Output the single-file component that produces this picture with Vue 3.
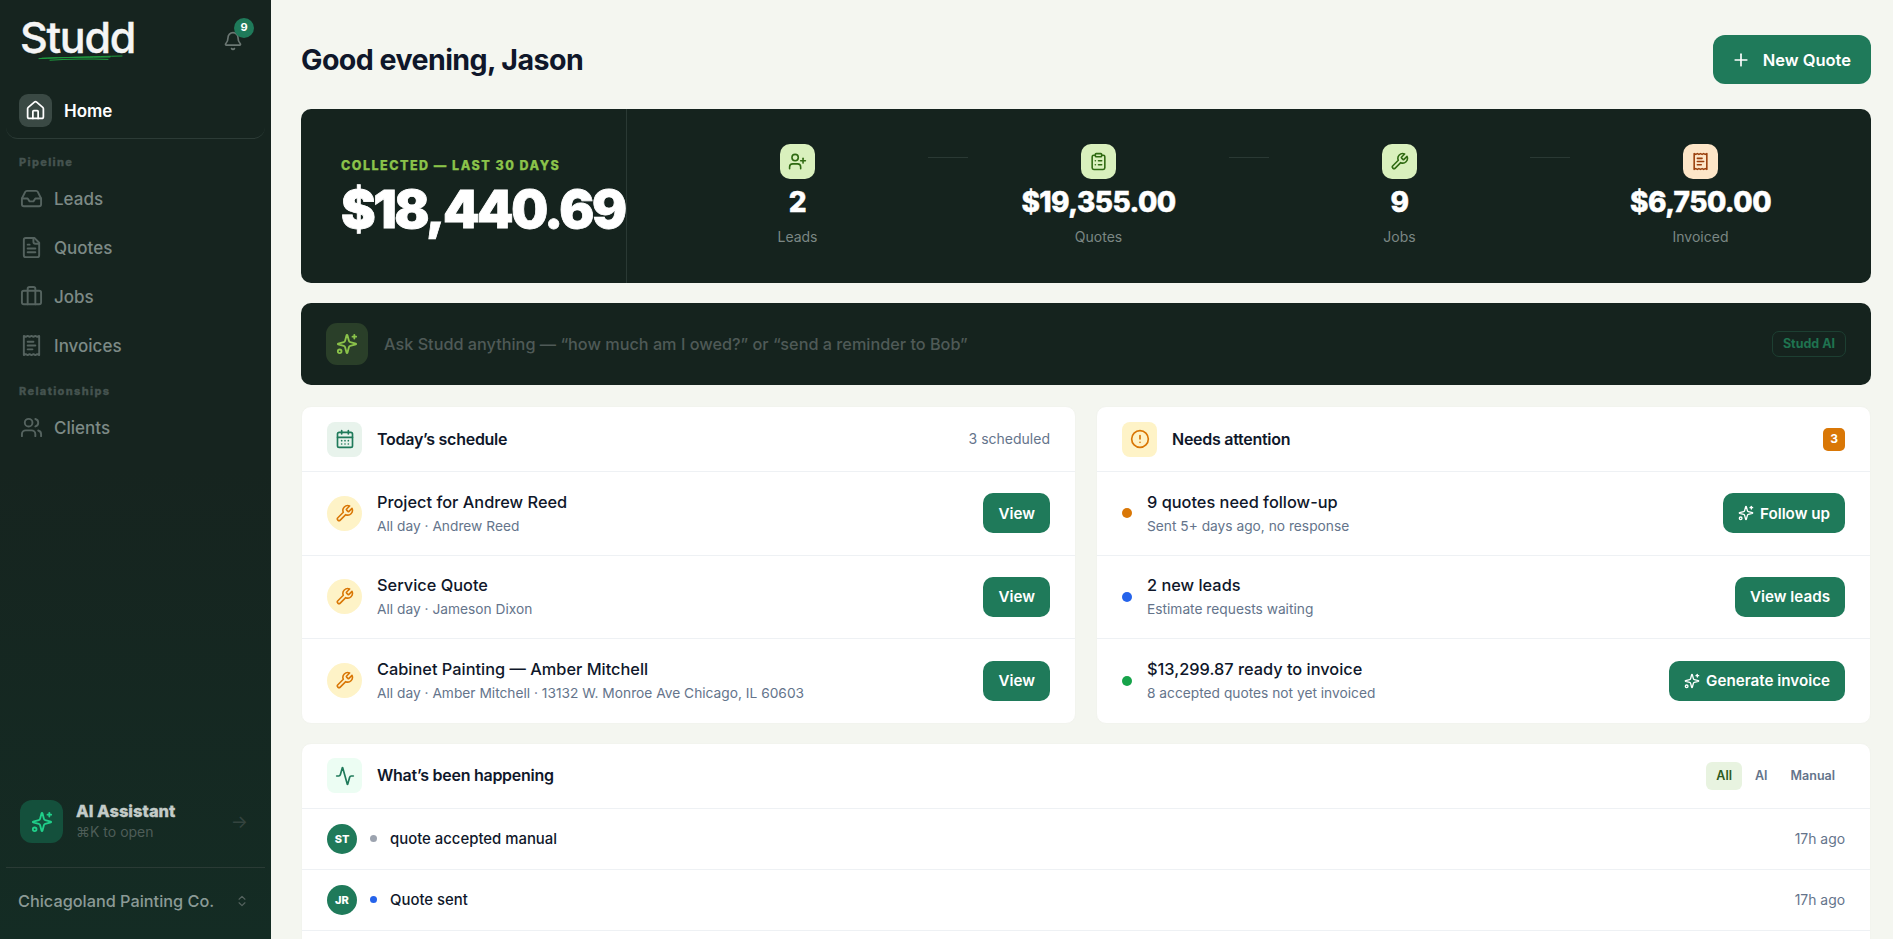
<template>
  <div class="app">
    <aside class="sidebar">
      <div class="brand">
        <div class="logo">
          Studd
          <svg class="logo-line" viewBox="0 0 86 6" width="86" height="6" fill="none" stroke="#1f9d3f" stroke-width="1" stroke-linecap="round">
            <path d="M1 3.6C24 2.6 56 1.6 84 1" />
            <path d="M12 5.2C30 4 52 3.6 70 4.4" />
            <path d="M4 3.2C26 2.2 50 2.4 72 2" />
          </svg>
        </div>
        <div class="bell">
          <svg class="ico" width="20" height="20" viewBox="0 0 24 24" v-html="icons.bell"></svg>
          <span class="bell-count">9</span>
        </div>
      </div>

      <nav class="nav">
        <a class="home">
          <span class="home-ico"><svg class="ico" width="21" height="21" viewBox="0 0 24 24" v-html="icons.house"></svg></span>
          Home
        </a>
        <template v-for="group in navGroups" :key="group.label">
          <div class="nav-label">{{ group.label }}</div>
          <a v-for="item in group.items" :key="item.name" class="nav-item">
            <svg class="ico" width="23" height="23" viewBox="0 0 24 24" v-html="icons[item.icon]"></svg>
            {{ item.name }}
          </a>
        </template>
      </nav>

      <div class="assistant">
        <span class="assistant-ico"><svg class="ico" width="22" height="22" viewBox="0 0 24 24" v-html="icons.sparkles"></svg></span>
        <div class="assistant-text">
          <div class="assistant-title">AI Assistant</div>
          <div class="assistant-sub">⌘K to open</div>
        </div>
        <span class="assistant-arrow">→</span>
      </div>
      <div class="company">
        <span>Chicagoland Painting Co.</span>
        <svg class="ico" width="14" height="14" viewBox="0 0 24 24" v-html="icons.chevrons"></svg>
      </div>
    </aside>

    <main class="main">
      <header class="top">
        <h1>Good evening, Jason</h1>
        <button class="new-quote">
          <svg class="ico" width="20" height="20" viewBox="0 0 24 24" v-html="icons.plus"></svg>
          New Quote
        </button>
      </header>

      <section class="hero">
        <div class="hero-left">
          <div class="hero-label">COLLECTED — LAST 30 DAYS</div>
          <div class="hero-amount">$18,440.69</div>
        </div>
        <div class="hero-stats">
          <template v-for="(stat, i) in stats" :key="stat.label">
            <div v-if="i > 0" class="connector"></div>
            <div class="stat">
              <span class="stat-ico" :class="stat.tone"><svg class="ico" width="19" height="19" viewBox="0 0 24 24" v-html="icons[stat.icon]"></svg></span>
              <div class="stat-value">{{ stat.value }}</div>
              <div class="stat-label">{{ stat.label }}</div>
            </div>
          </template>
        </div>
      </section>

      <section class="ask">
        <span class="ask-ico"><svg class="ico" width="22" height="22" viewBox="0 0 24 24" v-html="icons.sparkles"></svg></span>
        <span class="ask-text">Ask Studd anything — “how much am I owed?” or “send a reminder to Bob”</span>
        <span class="ask-badge">Studd AI</span>
      </section>

      <div class="columns">
        <section class="card">
          <div class="card-head">
            <span class="head-ico sched"><svg class="ico" width="20" height="20" viewBox="0 0 24 24" v-html="icons.calendar"></svg></span>
            <span class="card-title">Today’s schedule</span>
            <span class="card-meta">3 scheduled</span>
          </div>
          <div v-for="row in schedule" :key="row.title" class="row">
            <span class="row-ico"><svg class="ico" width="19" height="19" viewBox="0 0 24 24" v-html="icons.wrench"></svg></span>
            <div class="row-text">
              <div class="row-title">{{ row.title }}</div>
              <div class="row-sub">{{ row.sub }}</div>
            </div>
            <button class="btn">View</button>
          </div>
        </section>

        <section class="card">
          <div class="card-head">
            <span class="head-ico warn"><svg class="ico" width="20" height="20" viewBox="0 0 24 24" v-html="icons.alert"></svg></span>
            <span class="card-title">Needs attention</span>
            <span class="count">3</span>
          </div>
          <div v-for="row in attention" :key="row.title" class="row">
            <span class="dot" :class="row.dot"></span>
            <div class="row-text">
              <div class="row-title">{{ row.title }}</div>
              <div class="row-sub">{{ row.sub }}</div>
            </div>
            <button class="btn">
              <svg v-if="row.ai" class="ico" width="16" height="16" viewBox="0 0 24 24" v-html="icons.sparkles"></svg>
              {{ row.action }}
            </button>
          </div>
        </section>
      </div>

      <section class="card activity">
        <div class="card-head">
          <span class="head-ico pulse"><svg class="ico" width="20" height="20" viewBox="0 0 24 24" v-html="icons.activity"></svg></span>
          <span class="card-title">What’s been happening</span>
          <div class="tabs">
            <span class="tab on">All</span>
            <span class="tab">AI</span>
            <span class="tab">Manual</span>
          </div>
        </div>
        <div v-for="item in feed" :key="item.text" class="feed-row">
          <span class="avatar">{{ item.initials }}</span>
          <span class="feed-dot" :class="item.dot"></span>
          <span class="feed-text">{{ item.text }}</span>
          <span class="feed-time">{{ item.time }}</span>
        </div>
      </section>
    </main>
  </div>
</template>

<script setup>
const icons = {
  bell: '<path d="M10.268 21a2 2 0 0 0 3.464 0"/><path d="M3.262 15.326A1 1 0 0 0 4 17h16a1 1 0 0 0 .74-1.673C19.41 13.956 18 12.499 18 8A6 6 0 0 0 6 8c0 4.499-1.411 5.956-2.738 7.326"/>',
  house: '<path d="M15 21v-8a1 1 0 0 0-1-1h-4a1 1 0 0 0-1 1v8"/><path d="M3 10a2 2 0 0 1 .709-1.528l7-5.999a2 2 0 0 1 2.582 0l7 5.999A2 2 0 0 1 21 10v9a2 2 0 0 1-2 2H5a2 2 0 0 1-2-2z"/>',
  inbox: '<polyline points="22 12 16 12 14 15 10 15 8 12 2 12"/><path d="M5.45 5.11 2 12v6a2 2 0 0 0 2 2h16a2 2 0 0 0 2-2v-6l-3.45-6.89A2 2 0 0 0 16.76 4H7.24a2 2 0 0 0-1.79 1.11z"/>',
  file: '<path d="M15 2H6a2 2 0 0 0-2 2v16a2 2 0 0 0 2 2h12a2 2 0 0 0 2-2V7Z"/><path d="M14 2v4a2 2 0 0 0 2 2h4"/><path d="M10 9H8"/><path d="M16 13H8"/><path d="M16 17H8"/>',
  briefcase: '<path d="M16 20V4a2 2 0 0 0-2-2h-4a2 2 0 0 0-2 2v16"/><rect width="20" height="14" x="2" y="6" rx="2"/>',
  receipt: '<path d="M4 2v20l2-1 2 1 2-1 2 1 2-1 2 1 2-1 2 1V2l-2 1-2-1-2 1-2-1-2 1-2-1-2 1Z"/><path d="M14 8H8"/><path d="M16 12H8"/><path d="M13 16H8"/>',
  users: '<path d="M16 21v-2a4 4 0 0 0-4-4H6a4 4 0 0 0-4 4v2"/><circle cx="9" cy="7" r="4"/><path d="M22 21v-2a4 4 0 0 0-3-3.87"/><path d="M16 3.13a4 4 0 0 1 0 7.75"/>',
  sparkles: '<path d="M9.937 15.5A2 2 0 0 0 8.5 14.063l-6.135-1.582a.5.5 0 0 1 0-.962L8.5 9.936A2 2 0 0 0 9.937 8.5l1.582-6.135a.5.5 0 0 1 .963 0L14.063 8.5A2 2 0 0 0 15.5 9.937l6.135 1.581a.5.5 0 0 1 0 .964L15.5 14.063a2 2 0 0 0-1.437 1.437l-1.582 6.135a.5.5 0 0 1-.963 0z"/><path d="M20 2v4"/><path d="M22 4h-4"/><circle cx="4" cy="20" r="2"/>',
  chevrons: '<path d="m7 15 5 5 5-5"/><path d="m7 9 5-5 5 5"/>',
  plus: '<path d="M5 12h14"/><path d="M12 5v14"/>',
  userPlus: '<path d="M16 21v-2a4 4 0 0 0-4-4H6a4 4 0 0 0-4 4v2"/><circle cx="9" cy="7" r="4"/><line x1="19" x2="19" y1="8" y2="14"/><line x1="22" x2="16" y1="11" y2="11"/>',
  clipboard: '<rect width="8" height="4" x="8" y="2" rx="1" ry="1"/><path d="M16 4h2a2 2 0 0 1 2 2v14a2 2 0 0 1-2 2H6a2 2 0 0 1-2-2V6a2 2 0 0 1 2-2h2"/><path d="M12 11h4"/><path d="M12 16h4"/><path d="M8 11h.01"/><path d="M8 16h.01"/>',
  wrench: '<path d="M14.7 6.3a1 1 0 0 0 0 1.4l1.6 1.6a1 1 0 0 0 1.4 0l3.77-3.77a6 6 0 0 1-7.94 7.94l-6.91 6.91a2.12 2.12 0 0 1-3-3l6.91-6.91a6 6 0 0 1 7.94-7.94l-3.76 3.76z"/>',
  calendar: '<path d="M8 2v4"/><path d="M16 2v4"/><rect width="18" height="18" x="3" y="4" rx="2"/><path d="M3 10h18"/><path d="M8 14h.01"/><path d="M12 14h.01"/><path d="M16 14h.01"/><path d="M8 18h.01"/><path d="M12 18h.01"/><path d="M16 18h.01"/>',
  alert: '<circle cx="12" cy="12" r="10"/><line x1="12" x2="12" y1="8" y2="12"/><line x1="12" x2="12.01" y1="16" y2="16"/>',
  activity: '<path d="M22 12h-2.48a2 2 0 0 0-1.93 1.46l-2.35 8.36a.25.25 0 0 1-.48 0L9.24 2.18a.25.25 0 0 0-.48 0l-2.35 8.36A2 2 0 0 1 4.49 12H2"/>'
}

const navGroups = [
  {
    label: 'Pipeline',
    items: [
      { name: 'Leads', icon: 'inbox' },
      { name: 'Quotes', icon: 'file' },
      { name: 'Jobs', icon: 'briefcase' },
      { name: 'Invoices', icon: 'receipt' }
    ]
  },
  {
    label: 'Relationships',
    items: [{ name: 'Clients', icon: 'users' }]
  }
]

const stats = [
  { value: '2', label: 'Leads', icon: 'userPlus', tone: 'lime' },
  { value: '$19,355.00', label: 'Quotes', icon: 'clipboard', tone: 'lime' },
  { value: '9', label: 'Jobs', icon: 'wrench', tone: 'lime' },
  { value: '$6,750.00', label: 'Invoiced', icon: 'receipt', tone: 'peach' }
]

const schedule = [
  { title: 'Project for Andrew Reed', sub: 'All day · Andrew Reed' },
  { title: 'Service Quote', sub: 'All day · Jameson Dixon' },
  { title: 'Cabinet Painting — Amber Mitchell', sub: 'All day · Amber Mitchell · 13132 W. Monroe Ave Chicago, IL 60603' }
]

const attention = [
  { title: '9 quotes need follow-up', sub: 'Sent 5+ days ago, no response', action: 'Follow up', dot: 'orange', ai: true },
  { title: '2 new leads', sub: 'Estimate requests waiting', action: 'View leads', dot: 'blue', ai: false },
  { title: '$13,299.87 ready to invoice', sub: '8 accepted quotes not yet invoiced', action: 'Generate invoice', dot: 'green', ai: true }
]

const feed = [
  { initials: 'ST', text: 'quote accepted manual', time: '17h ago', dot: 'gray' },
  { initials: 'JR', text: 'Quote sent', time: '17h ago', dot: 'blue' }
]
</script>

<style>
html,
body {
  margin: 0;
  height: 100%;
  overflow: hidden;
}
</style>

<style scoped>
.app {
  display: flex;
  height: 939px;
  overflow: hidden;
  font-family: Inter, "Liberation Sans", sans-serif;
  background: #f4f6f0;
  color: #0f172a;
}

.ico {
  display: block;
  flex: none;
  fill: none;
  stroke: currentColor;
  stroke-width: 2;
  stroke-linecap: round;
  stroke-linejoin: round;
}

/* sidebar */
.sidebar {
  width: 271px;
  flex: none;
  display: flex;
  flex-direction: column;
  background: linear-gradient(180deg, #16241f 0%, #16241f 50%, #142c24 100%);
}

.brand {
  display: flex;
  justify-content: space-between;
  padding: 13px 16px 0 20px;
  height: 83px;
  box-sizing: border-box;
}

.logo {
  position: relative;
  font-size: 43px;
  line-height: 48px;
  font-weight: 500;
  letter-spacing: -0.03em;
  color: #f5f5f5;
  -webkit-text-stroke: 0.4px #f5f5f5;
}

.logo-line {
  position: absolute;
  left: 18px;
  top: 42px;
}

.bell {
  position: relative;
  margin: 18px 12px 0 0;
  color: #6b7773;
  height: 20px;
}

.bell-count {
  position: absolute;
  left: 11px;
  top: -13px;
  width: 20px;
  height: 20px;
  border-radius: 50%;
  background: #1f7a5a;
  color: #fff;
  font-size: 11px;
  font-weight: 700;
  line-height: 19px;
  text-align: center;
}

.nav {
  flex: 1;
  padding: 0 6px;
}

.home {
  display: flex;
  align-items: center;
  gap: 12px;
  height: 56px;
  padding: 0 13px;
  margin-bottom: 15px;
  box-sizing: border-box;
  border-bottom: 1px solid #2c3b36;
  border-radius: 12px;
  font-size: 17px;
  font-weight: 600;
  color: #fff;
}

.home-ico {
  width: 33px;
  height: 33px;
  border-radius: 9px;
  background: #3a4944;
  display: flex;
  align-items: center;
  justify-content: center;
}

.nav-label {
  padding-left: 13px;
  height: 17px;
  line-height: 17px;
  font-size: 11px;
  font-weight: 800;
  letter-spacing: 0.12em;
  color: #45534f;
  -webkit-text-stroke: 0.3px #45534f;
}

.nav-item {
  display: flex;
  align-items: center;
  gap: 11px;
  height: 49px;
  padding-left: 14px;
  font-size: 17px;
  font-weight: 500;
  color: #7d8a86;
}

.nav-item .ico {
  color: #55635f;
}

.nav-item + .nav-label {
  margin-top: 13px;
}

.nav-label + .nav-item {
  margin-top: 3px;
}

.assistant {
  display: flex;
  align-items: center;
  gap: 13px;
  padding: 0 23px 24px 20px;
}

.assistant-ico {
  width: 43px;
  height: 43px;
  flex: none;
  border-radius: 12px;
  background: #14503c;
  color: #20d08a;
  display: flex;
  align-items: center;
  justify-content: center;
}

.assistant-text {
  flex: 1;
}

.assistant-title {
  font-size: 16.5px;
  font-weight: 800;
  color: #c3cbc8;
  line-height: 20px;
  -webkit-text-stroke: 0.3px #c3cbc8;
}

.assistant-sub {
  font-size: 14px;
  color: #4e5d58;
  line-height: 21px;
}

.assistant-arrow {
  font-size: 18px;
  color: #34443f;
}

.company {
  margin: 0 6px;
  height: 72px;
  padding: 0 16px 6px 12px;
  box-sizing: border-box;
  border-top: 1px solid #2a3b35;
  display: flex;
  align-items: center;
  justify-content: space-between;
  font-size: 16.3px;
  font-weight: 500;
  color: #8b9a96;
}

.company .ico {
  color: #55635f;
}

/* main */
.main {
  flex: 1;
  min-width: 0;
  padding: 35px 22px 0 30px;
  display: flex;
  flex-direction: column;
}

.top {
  display: flex;
  align-items: center;
  justify-content: space-between;
  margin-bottom: 25px;
}

h1 {
  margin: 0;
  font-size: 28.6px;
  font-weight: 700;
  letter-spacing: -0.02em;
  color: #0f172a;
}

.new-quote {
  display: flex;
  align-items: center;
  gap: 12px;
  height: 49px;
  padding: 1px 20px 0 18px;
  border: 0;
  border-radius: 12px;
  background: #1f7a5a;
  color: #fff;
  font-family: inherit;
  font-size: 16.5px;
  font-weight: 600;
}

.hero {
  display: flex;
  height: 174px;
  flex: none;
  border-radius: 10px;
  background: #15231e;
  overflow: hidden;
}

.hero-left {
  width: 326px;
  flex: none;
  box-sizing: border-box;
  padding: 49px 0 0 40px;
  border-right: 1px solid #2a3934;
}

.hero-label {
  font-size: 12.5px;
  font-weight: 800;
  letter-spacing: 0.12em;
  color: #8bc34a;
  line-height: 16px;
  -webkit-text-stroke: 0.25px #8bc34a;
}

.hero-amount {
  margin-top: 6px;
  font-size: 52px;
  line-height: 60px;
  font-weight: 900;
  letter-spacing: -0.047em;
  color: #fff;
  white-space: nowrap;
  -webkit-text-stroke: 0.8px #fff;
}

.hero-stats {
  flex: 1;
  display: flex;
  padding: 35px 40px 0;
}

.stat {
  flex: 1;
  display: flex;
  flex-direction: column;
  align-items: center;
}

.stat-ico {
  width: 35px;
  height: 35px;
  border-radius: 10px;
  display: flex;
  align-items: center;
  justify-content: center;
}

.stat-ico.lime {
  background: #d9f0bd;
  color: #2f6a12;
}

.stat-ico.peach {
  background: #fde6c8;
  color: #9a3f0c;
}

.stat-value {
  margin-top: 6px;
  font-size: 28px;
  line-height: 34px;
  font-weight: 800;
  letter-spacing: -0.02em;
  color: #fff;
  -webkit-text-stroke: 0.5px #fff;
}

.stat-label {
  margin-top: 9px;
  font-size: 14px;
  line-height: 18px;
  color: #7b8784;
}

.connector {
  width: 40px;
  height: 1px;
  flex: none;
  margin-top: 13px;
  background: #2a3934;
}

.ask {
  flex: none;
  display: flex;
  align-items: center;
  height: 82px;
  margin-top: 20px;
  padding: 0 25px;
  border-radius: 10px;
  background: #15231e;
}

.ask-ico {
  width: 42px;
  height: 42px;
  border-radius: 11px;
  background: #2a3f29;
  color: #8bc34a;
  display: flex;
  align-items: center;
  justify-content: center;
}

.ask-text {
  flex: 1;
  margin-left: 16px;
  font-size: 16.25px;
  font-weight: 500;
  color: #4f5a57;
}

.ask-badge {
  height: 26px;
  line-height: 24px;
  box-sizing: border-box;
  padding: 0 10px;
  border: 1px solid #1d3f32;
  border-radius: 7px;
  font-size: 12.5px;
  font-weight: 700;
  color: #1f7350;
}

.columns {
  flex: none;
  display: grid;
  grid-template-columns: 1fr 1fr;
  gap: 20px;
  margin-top: 21px;
}

.card {
  background: #fff;
  border: 1px solid #f2f4ee;
  border-radius: 10px;
  overflow: hidden;
}

.card-head {
  display: flex;
  align-items: center;
  gap: 15px;
  height: 65px;
  box-sizing: border-box;
  padding: 0 25px;
  border-bottom: 1px solid #eef1f4;
}

.head-ico {
  width: 35px;
  height: 35px;
  border-radius: 8px;
  display: flex;
  align-items: center;
  justify-content: center;
}

.head-ico.sched {
  background: #e8f3ec;
  color: #1f7a5a;
}

.head-ico.warn {
  background: #fef3c7;
  color: #d97706;
}

.head-ico.pulse {
  background: #ecfdf3;
  color: #1f7a5a;
}

.card-title {
  flex: 1;
  padding-bottom: 1px;
  font-size: 16px;
  font-weight: 600;
  letter-spacing: -0.27px;
  color: #0f172a;
}

.card-meta {
  padding-bottom: 1px;
  font-size: 14px;
  color: #64748b;
}

.count {
  width: 22px;
  height: 23px;
  border-radius: 5px;
  background: #d97706;
  color: #fff;
  font-size: 12px;
  font-weight: 700;
  line-height: 22px;
  text-align: center;
}

.row {
  display: flex;
  align-items: center;
  gap: 15px;
  height: 83.5px;
  box-sizing: border-box;
  padding: 0 25px;
  border-bottom: 1px solid #eef1f4;
}

.row:last-child {
  border-bottom: 0;
}

.row-ico {
  width: 35px;
  height: 35px;
  flex: none;
  border-radius: 50%;
  background: #fef3c7;
  color: #d97706;
  display: flex;
  align-items: center;
  justify-content: center;
}

.row-text {
  flex: 1;
  min-width: 0;
}

.row-title {
  font-size: 16.35px;
  line-height: 22px;
  font-weight: 500;
  color: #0f172a;
}

.row-sub {
  margin-top: 3px;
  font-size: 13.75px;
  line-height: 20px;
  color: #64748b;
}

.dot {
  width: 10px;
  height: 10px;
  flex: none;
  border-radius: 50%;
}

.dot.orange {
  background: #d97706;
}

.dot.blue {
  background: #2563eb;
}

.dot.green {
  background: #16a34a;
}

.btn {
  display: flex;
  align-items: center;
  gap: 6px;
  height: 40px;
  padding: 0 15px;
  border: 0;
  border-radius: 10px;
  background: #1f7a5a;
  color: #fff;
  font-family: inherit;
  font-size: 15.2px;
  font-weight: 600;
}

.activity {
  flex: none;
  margin-top: 19px;
  height: 400px;
}

.tabs {
  display: flex;
  align-items: center;
  gap: 3px;
}

.tab {
  height: 28px;
  line-height: 28px;
  padding: 0 10px;
  border-radius: 6px;
  font-size: 12.5px;
  font-weight: 600;
  color: #64748b;
}

.tab.on {
  background: #e8f3e0;
  color: #2d5a1b;
}

.feed-row {
  display: flex;
  align-items: center;
  height: 61px;
  box-sizing: border-box;
  padding: 0 25px;
  border-bottom: 1px solid #eef1f4;
}

.avatar {
  width: 30px;
  height: 30px;
  border-radius: 50%;
  background: #1f7a5a;
  color: #fff;
  font-size: 11px;
  font-weight: 800;
  line-height: 30px;
  text-align: center;
}

.feed-dot {
  width: 7px;
  height: 7px;
  margin-left: 13px;
  border-radius: 50%;
}

.feed-dot.gray {
  background: #9ca3af;
}

.feed-dot.blue {
  background: #2563eb;
}

.feed-text {
  flex: 1;
  margin-left: 13px;
  font-size: 14.9px;
  font-weight: 500;
  color: #0f172a;
}

.feed-time {
  font-size: 13.9px;
  color: #64748b;
}
</style>
